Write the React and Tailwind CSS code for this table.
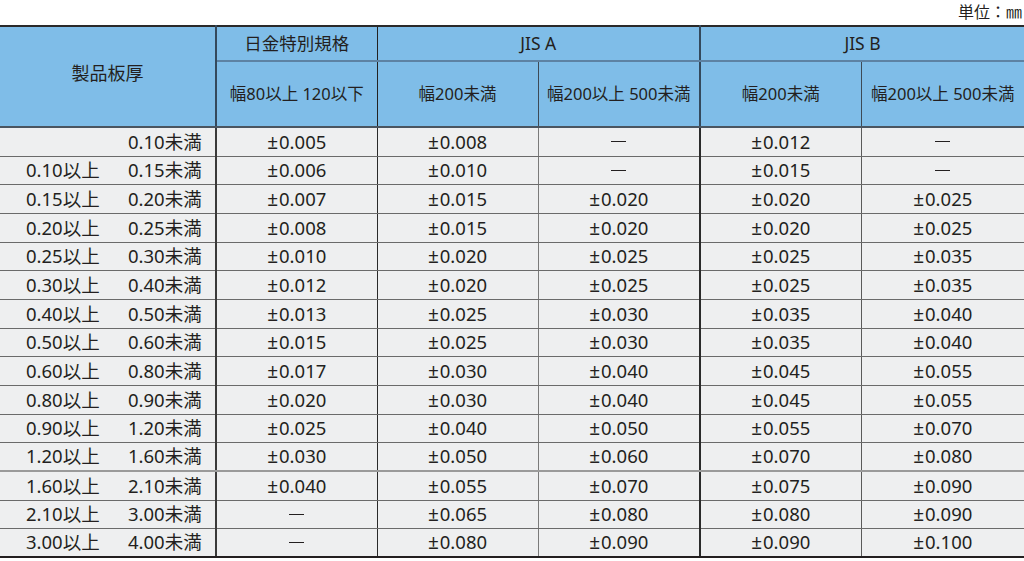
import React from "react";

const rows = [
  ["", "0.10未満", "±0.005", "±0.008", "—", "±0.012", "—"],
  ["0.10以上", "0.15未満", "±0.006", "±0.010", "—", "±0.015", "—"],
  ["0.15以上", "0.20未満", "±0.007", "±0.015", "±0.020", "±0.020", "±0.025"],
  ["0.20以上", "0.25未満", "±0.008", "±0.015", "±0.020", "±0.020", "±0.025"],
  ["0.25以上", "0.30未満", "±0.010", "±0.020", "±0.025", "±0.025", "±0.035"],
  ["0.30以上", "0.40未満", "±0.012", "±0.020", "±0.025", "±0.025", "±0.035"],
  ["0.40以上", "0.50未満", "±0.013", "±0.025", "±0.030", "±0.035", "±0.040"],
  ["0.50以上", "0.60未満", "±0.015", "±0.025", "±0.030", "±0.035", "±0.040"],
  ["0.60以上", "0.80未満", "±0.017", "±0.030", "±0.040", "±0.045", "±0.055"],
  ["0.80以上", "0.90未満", "±0.020", "±0.030", "±0.040", "±0.045", "±0.055"],
  ["0.90以上", "1.20未満", "±0.025", "±0.040", "±0.050", "±0.055", "±0.070"],
  ["1.20以上", "1.60未満", "±0.030", "±0.050", "±0.060", "±0.070", "±0.080"],
  ["1.60以上", "2.10未満", "±0.040", "±0.055", "±0.070", "±0.075", "±0.090"],
  ["2.10以上", "3.00未満", "—", "±0.065", "±0.080", "±0.080", "±0.090"],
  ["3.00以上", "4.00未満", "—", "±0.080", "±0.090", "±0.090", "±0.100"],
];

const font = { fontFamily: '"Noto Sans", "Noto Sans CJK JP", sans-serif' };

function Cell({ v }) {
  if (v === "—") {
    return (
      <div className="flex items-center justify-center h-full">
        <div className="w-[15px] h-[1px] bg-[#231f20]" />
      </div>
    );
  }
  return (
    <div className="flex items-center justify-center h-full">
      <span className="text-[19px] mr-[1px] leading-[20px]">±</span>
      <span>{v.slice(1)}</span>
    </div>
  );
}

export default function App() {
  return (
    <div className="w-[1024px] h-[561px] bg-white text-[#231f20] overflow-hidden" style={font}>
      <div className="h-[25px] flex justify-end items-start pr-[2px] pt-[1px] text-[16px] leading-[22px]">
        単位：㎜
      </div>
      <table className="w-[1024px] table-fixed border-collapse">
        <colgroup>
          <col className="w-[216px]" />
          <col className="w-[161px]" />
          <col className="w-[161px]" />
          <col className="w-[162px]" />
          <col className="w-[161px]" />
          <col className="w-[163px]" />
        </colgroup>
        <thead>
          <tr className="h-[35px] bg-[#7fbde8] text-[17.5px]">
            <th rowSpan={2} className="font-normal border-t-2 border-t-[#2a2a2a] border-r-2 border-r-[#34495c] border-b-2 border-b-[#4a5560] align-middle pb-[6px] text-[18px]">
              製品板厚
            </th>
            <th className="font-normal border-t-2 border-t-[#2a2a2a] border-r border-r-[#222] border-b-2 border-b-[#5d82a3]">
              日金特別規格
            </th>
            <th colSpan={2} className="font-normal border-t-2 border-t-[#2a2a2a] border-r-2 border-r-[#34495c] border-b-2 border-b-[#5d82a3]">
              JIS A
            </th>
            <th colSpan={2} className="font-normal border-t-2 border-t-[#2a2a2a] border-b-2 border-b-[#5d82a3]">
              JIS B
            </th>
          </tr>
          <tr className="h-[66px] bg-[#7fbde8] text-[16.5px]">
            <th className="font-normal border-r border-r-[#222] border-b-2 border-b-[#4a5560] whitespace-nowrap">幅80以上 120以下</th>
            <th className="font-normal border-r border-r-[#3d4a56] border-b-2 border-b-[#4a5560] whitespace-nowrap">幅200未満</th>
            <th className="font-normal border-r-2 border-r-[#34495c] border-b-2 border-b-[#4a5560] whitespace-nowrap">幅200以上 500未満</th>
            <th className="font-normal border-r border-r-[#3d4a56] border-b-2 border-b-[#4a5560] whitespace-nowrap">幅200未満</th>
            <th className="font-normal border-b-2 border-b-[#4a5560] whitespace-nowrap">幅200以上 500未満</th>
          </tr>
        </thead>
        <tbody className="bg-[#eeeff0] text-[18.5px]">
          {rows.map((r, i) => {
            const last = i === rows.length - 1;
            const bb = last
              ? "border-b-2 border-b-[#231f20]"
              : i === 11
              ? "border-b-2 border-b-[#9a9a9a]"
              : "border-b border-b-[#6a6a6a]";
            const h = i % 3 === 1 ? "h-[28px]" : "h-[29px]";
            return (
              <tr key={i} className={h}>
                <td className={`${bb} border-r-2 border-r-[#3a3a3a] p-0`}>
                  <div className="flex pl-[26px] leading-[20px]">
                    <span className="w-[102px]">{r[0]}</span>
                    <span>{r[1]}</span>
                  </div>
                </td>
                {r.slice(2).map((v, j) => {
                  const br =
                    j === 0
                      ? "border-r border-r-[#2a2a2a]"
                      : j === 1
                      ? "border-r border-r-[#7a7a7a]"
                      : j === 2
                      ? "border-r-2 border-r-[#2a2a2a]"
                      : j === 3
                      ? "border-r border-r-[#5a5a5a]"
                      : "";
                  return (
                    <td key={j} className={`${bb} ${br} p-0 leading-[20px]`}>
                      <Cell v={v} />
                    </td>
                  );
                })}
              </tr>
            );
          })}
        </tbody>
      </table>
    </div>
  );
}
